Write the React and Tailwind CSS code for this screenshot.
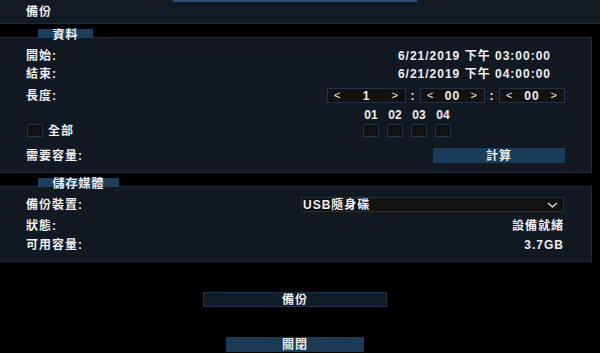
import React from 'react'

const font = { fontFamily: '"Liberation Sans", "Noto Sans CJK TC", sans-serif' }

function Spinner({ value, width }) {
  return (
    <div className={`flex h-[15px] items-center justify-between border border-[#1f3246] bg-[#121212] px-[6px] ${width}`}>
      <span className="text-[11px] font-normal leading-none">&lt;</span>
      <span className="leading-none">{value}</span>
      <span className="text-[11px] font-normal leading-none">&gt;</span>
    </div>
  )
}

function Box() {
  return <div className="h-[13px] w-[16px] border border-[#1f3246] bg-[#121212]" />
}

function Tab({ label, width }) {
  return (
    <div className={`relative z-10 ml-[38px] flex h-[9px] items-center justify-center bg-[#1d3f5c] text-[12px] leading-none ${width}`}>
      <span className="mt-[2px]">{label}</span>
    </div>
  )
}

export default function App() {
  return (
    <div className="h-[353px] w-[600px] overflow-hidden bg-black text-[12px] font-semibold tracking-[1px] text-[#eeeeee]" style={font}>
      {/* header */}
      <div className="h-[24px] border-b border-[#1d2b3a] bg-[#131a23]">
        <div className="ml-[173px] h-[2px] w-[244px] bg-[#2a4f74]" />
        <div className="pl-[26px] pt-[3px] leading-[14px]">備份</div>
      </div>

      {/* 資料 */}
      <div className="pt-[5px]">
        <Tab label="資料" width="w-[55px]" />
        <div className="-mt-[1px] h-[136px] w-[592px] border-y border-r border-[#1d2b3a] bg-[#121922] pl-[26px] pr-[26px]">
          <div className="mt-[9px] flex h-[18px] items-center justify-between">
            <span>開始:</span>
            <span className="pr-[14px]">6/21/2019 下午 03:00:00</span>
          </div>
          <div className="flex h-[18px] items-center justify-between">
            <span>結束:</span>
            <span className="pr-[14px]">6/21/2019 下午 04:00:00</span>
          </div>
          <div className="mt-[5px] flex h-[15px] items-center justify-between">
            <span>長度:</span>
            <div className="flex items-center">
              <Spinner value="1" width="w-[79px]" />
              <span className="w-[14px] text-center">:</span>
              <Spinner value="00" width="w-[65px]" />
              <span className="w-[14px] text-center">:</span>
              <Spinner value="00" width="w-[66px]" />
            </div>
          </div>
          <div className="mt-[6px] flex h-[12px] items-center">
            <div className="w-[337px]" />
            <div className="flex gap-[8px]">
              {['01', '02', '03', '04'].map((n) => (
                <span key={n} className="w-[16px] text-center leading-none tracking-normal">{n}</span>
              ))}
            </div>
          </div>
          <div className="mt-[3px] flex h-[13px] items-center">
            <div className="flex w-[337px] items-center gap-[5px] pl-[1px]">
              <Box />
              <span>全部</span>
            </div>
            <div className="flex gap-[8px]">
              <Box />
              <Box />
              <Box />
              <Box />
            </div>
          </div>
          <div className="mt-[11px] flex h-[15px] items-center justify-between">
            <span>需要容量:</span>
            <div className="flex h-[15px] w-[132px] items-center justify-center bg-[#1b3c59]">計算</div>
          </div>
        </div>
      </div>

      {/* 儲存媒體 */}
      <div className="pt-[5px]">
        <Tab label="儲存媒體" width="w-[81px]" />
        <div className="-mt-[1px] h-[76px] w-[592px] border-y border-r border-[#1d2b3a] bg-[#121922] pl-[26px] pr-[27px]">
          <div className="mt-[10px] flex h-[15px] items-center justify-between">
            <span>備份裝置:</span>
            <div className="flex h-[15px] w-[263px] items-center justify-between border border-[#1f3246] bg-[#121212] pl-[1px] pr-[5px]">
              <span>USB隨身碟</span>
              <svg width="11" height="6" viewBox="0 0 11 6" fill="none" stroke="#e6e6e6" strokeWidth="1.3">
                <path d="M1 1l4.5 4 4.5-4" />
              </svg>
            </div>
          </div>
          <div className="mt-[5px] flex h-[18px] items-center justify-between">
            <span>狀態:</span>
            <span>設備就緒</span>
          </div>
          <div className="mt-[1px] flex h-[18px] items-center justify-between">
            <span>可用容量:</span>
            <span>3.7GB</span>
          </div>
        </div>
      </div>

      {/* buttons */}
      <div className="flex flex-col items-center pt-[30px]">
        <div className="-ml-[10px] flex h-[15px] w-[184px] items-center justify-center border border-[#1d3347] bg-[#0f1d29]">備份</div>
        <div className="mt-[30px] -ml-[10px] flex h-[15px] w-[138px] items-center justify-center bg-[#1b3a56]">關閉</div>
      </div>
    </div>
  )
}
